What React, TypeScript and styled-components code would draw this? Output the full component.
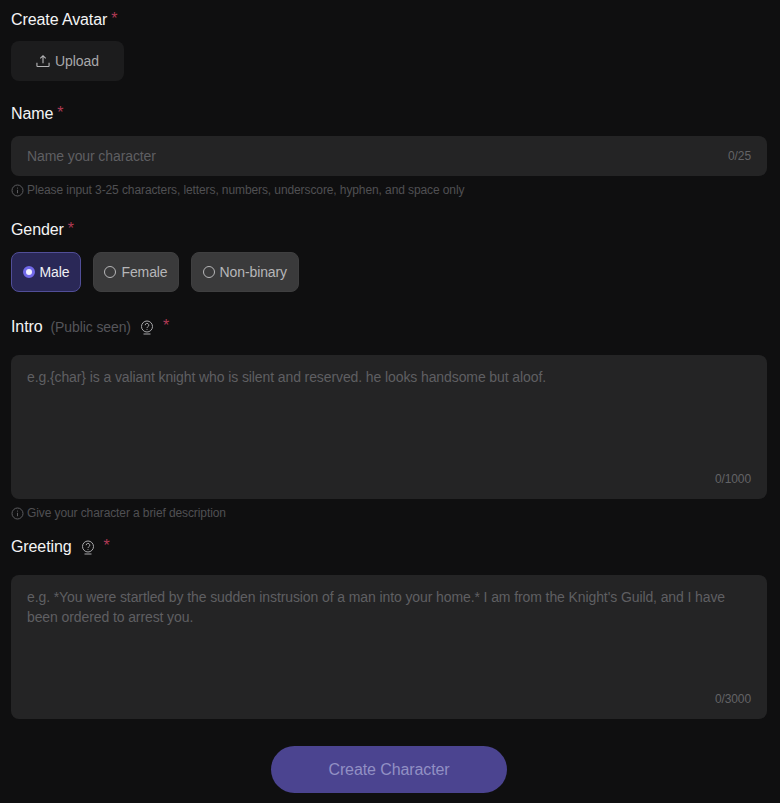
import React from "react"
import styled, { createGlobalStyle } from "styled-components"

const GlobalStyle = createGlobalStyle`
    html, body {
        margin: 0;
        padding: 0;
        background: #0f0f10;
        font-family: "Liberation Sans", Arial, sans-serif;
    }
    * {
        box-sizing: border-box;
    }
`
const Page = styled.form`
    width: 780px;
    height: 803px;
    padding: 10px 13px 0 11px;
    display: flex;
    flex-direction: column;
    overflow: hidden;
    letter-spacing: -0.1px;
`
const Label = styled.div<{ $top?: number }>`
    display: flex;
    align-items: center;
    height: 20px;
    margin-top: ${(p) => p.$top ?? 0}px;
    font-size: 16px;
    color: #f4f4f5;
`
const Star = styled.span<{ $gap?: number }>`
    color: #b03a55;
    font-size: 16px;
    margin-left: ${(p) => p.$gap ?? 4}px;
    position: relative;
    top: -1px;
`
const Muted = styled.span`
    color: #55555a;
    font-size: 14px;
    margin-left: 8px;
`
const HelpIcon = styled.svg`
    width: 14px;
    height: 15px;
    margin-left: 9px;
    color: #a8a8aa;
`
const UploadButton = styled.button`
    width: 113px;
    height: 40px;
    margin-top: 11px;
    display: flex;
    align-items: center;
    justify-content: center;
    gap: 5px;
    background: #1c1c1d;
    border: none;
    border-radius: 8px;
    color: #a8a8aa;
    font: 14px "Liberation Sans", Arial, sans-serif;
    letter-spacing: -0.1px;
`
const InputBox = styled.div`
    height: 40px;
    margin-top: 12px;
    padding: 0 16px;
    display: flex;
    align-items: center;
    justify-content: space-between;
    background: #242425;
    border-radius: 8px;
`
const Placeholder = styled.span`
    color: #5f5f62;
    font-size: 14px;
    line-height: 20px;
`
const Counter = styled.span`
    color: #636366;
    font-size: 12px;
`
const TextBox = styled.div<{ $top: number }>`
    height: 144px;
    margin-top: ${(p) => p.$top}px;
    padding: 12px 16px 13px;
    display: flex;
    flex-direction: column;
    justify-content: space-between;
    background: #242425;
    border-radius: 8px;
`
const CounterRow = styled.div`
    display: flex;
    justify-content: flex-end;
`
const Hint = styled.div`
    height: 14px;
    margin-top: 7px;
    display: flex;
    align-items: center;
    gap: 3px;
    color: #505053;
    font-size: 12px;
`
const RadioRow = styled.div`
    display: flex;
    gap: 12px;
    margin-top: 12px;
`
const RadioItem = styled.div<{ $active?: boolean }>`
    height: 40px;
    padding: 0 10.5px;
    display: flex;
    align-items: center;
    gap: 5px;
    border-radius: 8px;
    font-size: 14px;
    background: ${(p) => (p.$active ? "#2a2857" : "#3a3a3b")};
    border: 1px solid ${(p) => (p.$active ? "#514e98" : "#3f3f40")};
    color: ${(p) => (p.$active ? "#f0f0f4" : "#b6b6b8")};
`
const Dot = styled.span<{ $active?: boolean }>`
    width: 12px;
    height: 12px;
    border-radius: 50%;
    flex: none;
    background: ${(p) => (p.$active ? "#f2f0ff" : "transparent")};
    border: ${(p) => (p.$active ? "3px solid #7169e8" : "1px solid #b6b6b8")};
`
const SubmitRow = styled.div`
    display: flex;
    justify-content: center;
    margin-top: 27px;
`
const SubmitButton = styled.button`
    width: 236px;
    height: 47px;
    border: none;
    border-radius: 24px;
    background: #4b4490;
    color: #9290c4;
    font: 16px "Liberation Sans", Arial, sans-serif;
    letter-spacing: -0.1px;
`

const InfoIcon: React.FC = () => (
    <svg width="13" height="13" viewBox="0 0 13 13" fill="none" stroke="#5c5c5f">
        <circle cx="6.5" cy="6.5" r="5.5" />
        <path d="M6.5 5.8v3.4M6.5 3.6v1" />
    </svg>
)

const Help: React.FC = () => (
    <HelpIcon viewBox="0 0 14 15" fill="none" stroke="currentColor">
        <circle cx="7" cy="6.5" r="5.5" />
        <path d="M5.2 5.2a1.8 1.8 0 1 1 2.6 1.6c-.5.3-.8.6-.8 1.2M7 9.2v.8" />
        <path d="M3.5 14h7" />
    </HelpIcon>
)

const UploadIcon: React.FC = () => (
    <svg width="14" height="14" viewBox="0 0 15 15" fill="none" stroke="#b4b4b6" strokeWidth="1.2">
        <path d="M7.5 10V2M4.6 4.6 7.5 1.8l2.9 2.8" />
        <path d="M1 9.5v3.2c0 .4.3.7.7.7h11.6c.4 0 .7-.3.7-.7V9.5" />
    </svg>
)

const App: React.FC = () => {
    return (
        <Page>
            <GlobalStyle />
            <Label>
                Create Avatar<Star>*</Star>
            </Label>
            <UploadButton type="button">
                <UploadIcon />
                Upload
            </UploadButton>

            <Label $top={23}>
                Name<Star>*</Star>
            </Label>
            <InputBox>
                <Placeholder>Name your character</Placeholder>
                <Counter>0/25</Counter>
            </InputBox>
            <Hint>
                <InfoIcon />
                Please input 3-25 characters, letters, numbers, underscore, hyphen, and space only
            </Hint>

            <Label $top={23}>
                Gender<Star>*</Star>
            </Label>
            <RadioRow>
                <RadioItem $active>
                    <Dot $active />
                    Male
                </RadioItem>
                <RadioItem>
                    <Dot />
                    Female
                </RadioItem>
                <RadioItem>
                    <Dot />
                    Non-binary
                </RadioItem>
            </RadioRow>

            <Label $top={25}>
                Intro
                <Muted>(Public seen)</Muted>
                <Help />
                <Star $gap={9}>*</Star>
            </Label>
            <TextBox $top={18}>
                <Placeholder>e.g.{"{char}"} is a valiant knight who is silent and reserved. he looks handsome but aloof.</Placeholder>
                <CounterRow>
                    <Counter>0/1000</Counter>
                </CounterRow>
            </TextBox>
            <Hint>
                <InfoIcon />
                Give your character a brief description
            </Hint>

            <Label $top={17}>
                Greeting
                <Help />
                <Star $gap={9}>*</Star>
            </Label>
            <TextBox $top={18}>
                <Placeholder>
                    e.g. *You were startled by the sudden instrusion of a man into your home.* I am from the Knight's Guild, and I have been ordered to arrest you.
                </Placeholder>
                <CounterRow>
                    <Counter>0/3000</Counter>
                </CounterRow>
            </TextBox>

            <SubmitRow>
                <SubmitButton type="button">Create Character</SubmitButton>
            </SubmitRow>
        </Page>
    )
}

export default App
